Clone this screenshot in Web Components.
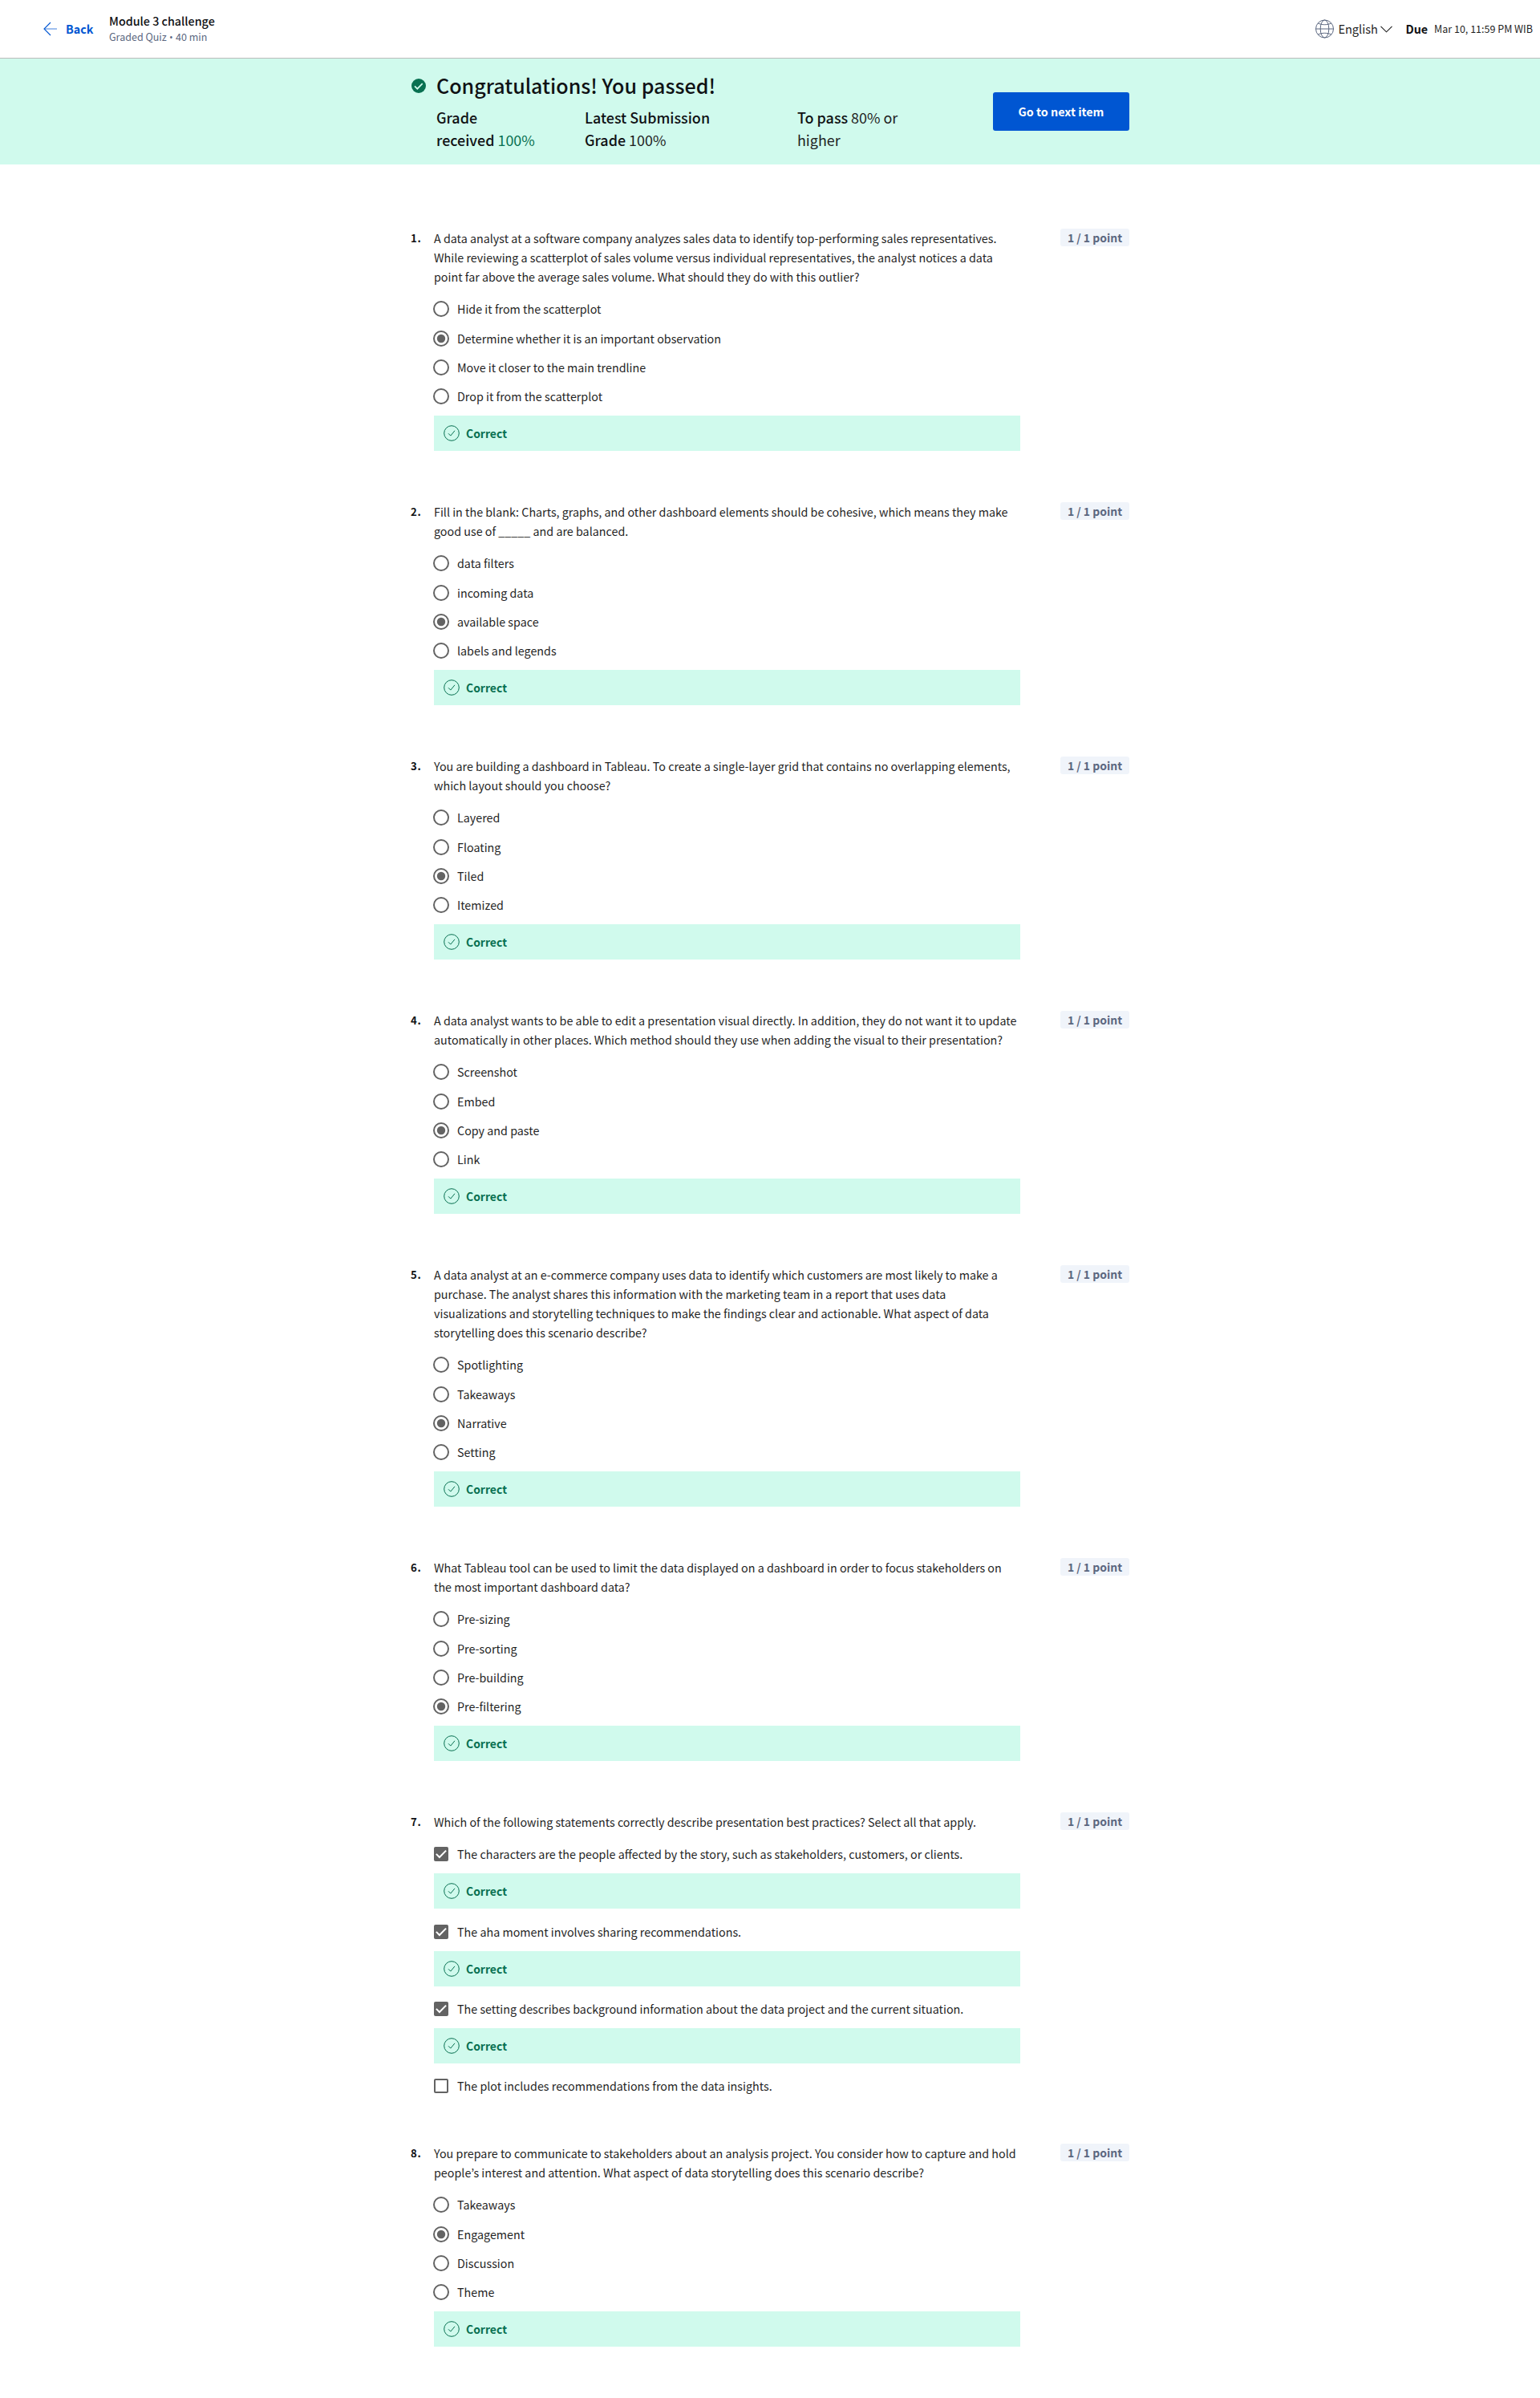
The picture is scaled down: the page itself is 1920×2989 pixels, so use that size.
<!DOCTYPE html>
<html lang="en">
<head>
<meta charset="utf-8">
<title>Module 3 challenge</title>
<style>
body{margin:0;background:#fff;color:#1f1f1f;font-family:"Noto Sans CJK KR","Noto Sans CJK SC",sans-serif;font-size:14.32px;line-height:24px}
main{width:896px;margin:80px auto 0}
</style>
</head>
<body>
<quiz-header></quiz-header>
<grade-banner></grade-banner>
<main><quiz-list></quiz-list></main>

<template id="t-header">
<style>
:host{display:flex;align-items:center;justify-content:space-between;box-sizing:border-box;height:73px;padding:0 9px 0 54px;border-bottom:1px solid #bbb;background:#fff}
.l,.r,.back,.lang{display:flex;align-items:center}
.back{color:#0056d2;font-weight:700;gap:11px;width:82px}
.t{font-weight:500;line-height:20px;color:#0f1114;font-size:14.32px;margin:-1px 0 1px}
.s{font-size:12.53px;line-height:18px;color:#5b6780}
.s i{font:12.5px "Open Sans",sans-serif;line-height:10px;padding:0 .5px}
.lang{gap:5px;font-size:14.6px}
.lang svg:last-child{margin-left:-2px}
b{margin-left:16.5px;color:#0f1114}
.d{margin-left:8px;font-size:12.53px}
svg{display:block}
</style>
<div class="l"><div class="back"><svg width="17" height="18" viewBox="0 0 17 18" fill="none" stroke="#0056d2"><path d="M9 1 1 9l8 8" stroke-width="1.1"/><path d="M1 9h16" stroke-width="1" opacity=".75"/></svg><span>Back</span></div>
<div><div class="t">Module 3 challenge</div><div class="s">Graded Quiz <i>•</i> 40 min</div></div></div>
<div class="r"><div class="lang"><svg width="23" height="24" viewBox="0 0 23 24" fill="none" stroke="#5b6780" stroke-width="1"><circle cx="11.5" cy="12" r="11"/><ellipse cx="11.5" cy="12" rx="5.3" ry="11"/><path d="M.5 12h22M3.2 5c5 2.3 11.600 2.300 16.600 0M3.200 19c5-2.300 11.600-2.300 16.600 0"/></svg><span>English</span><svg width="15" height="9" viewBox="0 0 15 9" fill="none" stroke="#1f1f1f" stroke-width="1.1"><path d="m.5.800 7 7 7-7"/></svg></div><b>Due</b><span class="d">Mar 10, 11:59 PM WIB</span></div>
</template>

<template id="t-banner">
<style>
:host{display:block;height:132px;background:#d0faed;color:#1f1f1f}
.w{width:896px;margin:auto;height:132px;display:flex}
.i{width:32px;padding:25px 0 0 1px;box-sizing:border-box}
.m{width:694px}
h1{margin:15px 0 0;font-weight:500;font-size:25.05px;line-height:36px;color:#0f1114}
.g{display:flex;margin-top:8px;font-size:17.92px;line-height:28px}
.g div:nth-child(1){width:185px}.g div:nth-child(2){width:265px}
b{font-weight:500;color:#0f1114}em{font-style:normal;color:#087051}
button{all:unset;box-sizing:border-box;width:170px;height:48px;margin-top:42px;background:#0056d2;border-radius:3px;color:#fff;font-weight:700;text-align:center;line-height:48px}
svg{display:block}
</style>
<div class="w"><div class="i"><svg width="18" height="18" viewBox="0 0 18 18"><circle cx="9" cy="9" r="9" fill="#087051"/><path d="m4 9.400 3.300 3.300 6.400-6.600" fill="none" stroke="#d0faed" stroke-width="1.700"/></svg></div>
<div class="m"><h1>Congratulations! You passed!</h1><div class="g"><div><b>Grade<br>received</b> <em>100%</em></div><div><b>Latest Submission<br>Grade</b> 100%</div><div><b>To pass</b> 80% or<br>higher</div></div></div>
<button>Go to next item</button></div>
</template>

<template id="t-question">
<style>
:host{display:flex;margin-bottom:54px}
.n{width:29px;font-weight:700;font-size:13.200px;letter-spacing:.6px;color:#0f1114}
.b{width:731px}
.p{margin-bottom:10px;white-space:nowrap}
.pt{height:22px;width:86px;margin-left:auto;border-radius:3px;background:#f0f4fa;color:#5b6780;font-weight:700;font-size:13.98px;line-height:22px;text-align:center}
</style>
<div class="n"></div><div class="b"><div class="p"><slot name="prompt"></slot></div><slot></slot></div><div class="pt">1 / 1 point</div>
</template>

<template id="t-option">
<style>
:host{display:flex;align-items:center;height:36px;gap:10px}
:host([first]){margin-bottom:1px}
svg{display:block;margin-left:-1px}
</style>
<span class="k"></span><span><slot></slot></span>
</template>

<template id="t-feedback">
<style>
:host{display:flex;align-items:center;box-sizing:border-box;height:44px;margin:6px 0 10px;padding-left:12px;gap:8px;background:#d0faed;color:#087051;font-weight:700;font-size:13.95px}
svg{display:block}
</style>
<svg width="20" height="20" viewBox="0 0 20 20" fill="none" stroke="#087051"><circle cx="10" cy="10" r="9.300"/><path d="m6 10.300 2.800 2.800 5.200-6.300"/></svg><span>Correct</span>
</template>

<script>
const stamp=(el,id)=>{const r=el.attachShadow({mode:'open'});r.append(document.getElementById(id).content.cloneNode(true));return r};
customElements.define('quiz-header',class extends HTMLElement{constructor(){super();stamp(this,'t-header')}});
customElements.define('grade-banner',class extends HTMLElement{constructor(){super();stamp(this,'t-banner')}});
customElements.define('answer-feedback',class extends HTMLElement{constructor(){super();stamp(this,'t-feedback')}});
const RING='<circle cx="10" cy="10" r="9" fill="none" stroke="#636363" stroke-width="2"/>';
const MARK={
 radio:RING,
 radioOn:RING+'<circle cx="10" cy="10" r="5.200" fill="#636363"/>',
 box:'<rect x="2" y="2" width="16" height="16" rx="1" fill="none" stroke="#636363" stroke-width="2"/>',
 boxOn:'<rect x="1" y="1" width="18" height="18" rx="2" fill="#636363"/><path d="m3.900 9.900 4 4.100 8.200-8.400" fill="none" stroke="#fff" stroke-width="2"/>'
};
customElements.define('answer-option',class extends HTMLElement{
 constructor(){super();this.root=stamp(this,'t-option')}
 connectedCallback(){this.root.querySelector('.k').innerHTML='<svg width="20" height="20" viewBox="0 0 20 20">'+MARK[this.getAttribute('kind')]+'</svg>'}
});
customElements.define('quiz-question',class extends HTMLElement{
 constructor(){super();this.root=stamp(this,'t-question')}
 connectedCallback(){this.root.querySelector('.n').textContent=this.getAttribute('number')+'.'}
});
const DATA=[
 ['A data analyst at a software company analyzes sales data to identify top-performing sales representatives.<br>While reviewing a scatterplot of sales volume versus individual representatives, the analyst notices a data<br>point far above the average sales volume. What should they do with this outlier?',['Hide it from the scatterplot','Determine whether it is an important observation','Move it closer to the main trendline','Drop it from the scatterplot'],1],
 ['Fill in the blank: Charts, graphs, and other dashboard elements should be cohesive, which means they make<br>good use of _____ and are balanced.',['data filters','incoming data','available space','labels and legends'],2],
 ['You are building a dashboard in Tableau. To create a single-layer grid that contains no overlapping elements,<br>which layout should you choose?',['Layered','Floating','Tiled','Itemized'],2],
 ['A data analyst wants to be able to edit a presentation visual directly. In addition, they do not want it to update<br>automatically in other places. Which method should they use when adding the visual to their presentation?',['Screenshot','Embed','Copy and paste','Link'],2],
 ['A data analyst at an e-commerce company uses data to identify which customers are most likely to make a<br>purchase. The analyst shares this information with the marketing team in a report that uses data<br>visualizations and storytelling techniques to make the findings clear and actionable. What aspect of data<br>storytelling does this scenario describe?',['Spotlighting','Takeaways','Narrative','Setting'],2],
 ['What Tableau tool can be used to limit the data displayed on a dashboard in order to focus stakeholders on<br>the most important dashboard data?',['Pre-sizing','Pre-sorting','Pre-building','Pre-filtering'],3],
 ['Which of the following statements correctly describe presentation best practices? Select all that apply.',['The characters are the people affected by the story, such as stakeholders, customers, or clients.','The aha moment involves sharing recommendations.','The setting describes background information about the data project and the current situation.','The plot includes recommendations from the data insights.'],null],
 ['You prepare to communicate to stakeholders about an analysis project. You consider how to capture and hold<br>people’s interest and attention. What aspect of data storytelling does this scenario describe?',['Takeaways','Engagement','Discussion','Theme'],1]
];
customElements.define('quiz-list',class extends HTMLElement{
 constructor(){
  super();
  const ok='<answer-feedback></answer-feedback>';
  this.attachShadow({mode:'open'}).innerHTML='<style>:host{display:block}</style>'+DATA.map(([prompt,options,picked],i)=>{
   const multi=picked===null;
   const rows=options.map((o,j)=>{
    const on=multi?j<3:j===picked;
    return `<answer-option kind="${multi?'box':'radio'}${on?'On':''}"${!multi&&j===0?' first':''}>${o}</answer-option>`+(multi&&on?(j===0?'<answer-feedback style="margin-bottom:11px"></answer-feedback>':ok):'');
   }).join('');
   return `<quiz-question number="${i+1}"><div slot="prompt">${prompt}</div>${rows}${multi?'':ok}</quiz-question>`;
  }).join('');
 }
});
</script>
</body>
</html>
